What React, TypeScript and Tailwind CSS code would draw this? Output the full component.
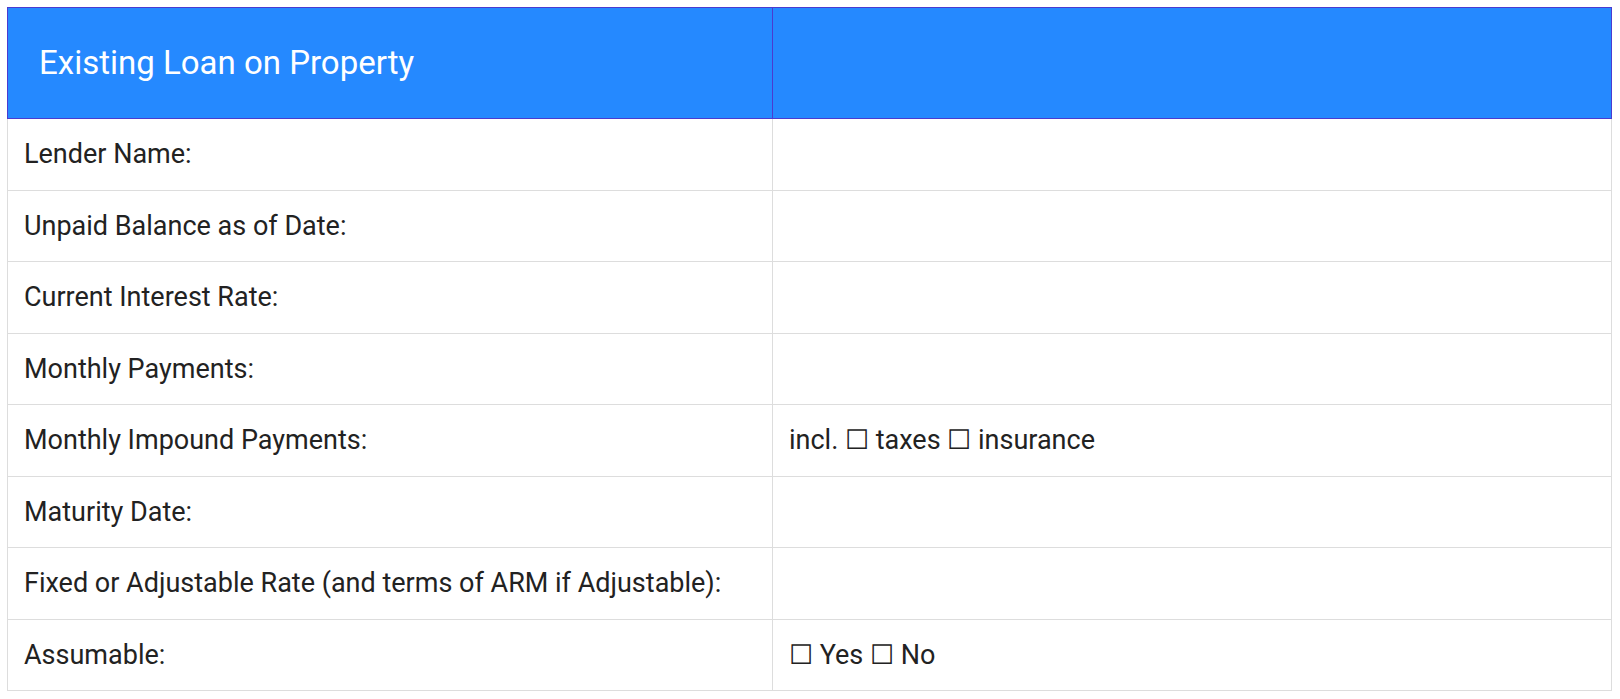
import React from "react";

const rows: [string, string][] = [
  ["Lender Name:", ""],
  ["Unpaid Balance as of Date:", ""],
  ["Current Interest Rate:", ""],
  ["Monthly Payments:", ""],
  ["Monthly Impound Payments:", "incl. ☐ taxes ☐ insurance"],
  ["Maturity Date:", ""],
  ["Fixed or Adjustable Rate (and terms of ARM if Adjustable):", ""],
  ["Assumable:", "☐ Yes ☐ No"],
];

export default function App() {
  return (
    <div className="bg-white w-[1620px] h-[699px] pt-[7px] pl-[7px]" style={{ fontFamily: "Roboto, 'Liberation Sans', sans-serif" }}>
      <table className="border-collapse w-[1605px] table-fixed">
        <colgroup>
          <col className="w-[765px]" />
          <col />
        </colgroup>
        <thead>
          <tr className="h-[111px] bg-[#2589ff]">
            <th className="border border-[#4b3bd0] text-left font-normal text-white text-[33px] pl-[31px]">Existing Loan on Property</th>
            <th className="border border-[#4b3bd0]"></th>
          </tr>
        </thead>
        <tbody>
          {rows.map(([a, b], i) => (
            <tr key={i} className="h-[71.5px]">
              <td className="border border-[#dddddd] text-[#222222] text-[27px] pl-[16px]">{a}</td>
              <td className="border border-[#dddddd] text-[#222222] text-[27px] pl-[16px]">{b}</td>
            </tr>
          ))}
        </tbody>
      </table>
    </div>
  );
}
